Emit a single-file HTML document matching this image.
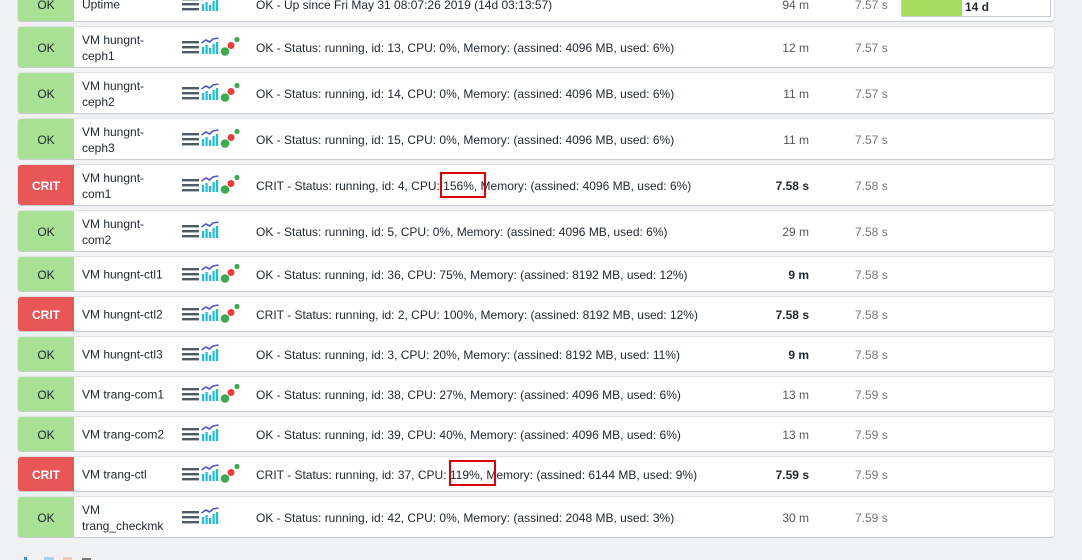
<!DOCTYPE html>
<html><head><meta charset="utf-8"><style>
body{margin:0;width:1082px;height:560px;background:#f0f1f3;font-family:"Liberation Sans",Arial,sans-serif;font-size:12px;color:#1e262e;position:relative;overflow:hidden}
.r{position:absolute;left:18px;width:1036px;background:#fff;border-radius:3px;box-shadow:0 1px 0 #c8cbd3,0 0 0 1px #e0e2e7}
.b{position:absolute;left:0;top:0;bottom:0;width:56px;border-radius:3px 0 0 3px;display:flex;align-items:center;justify-content:center;font-size:12px;padding-top:1px;box-sizing:border-box}
.ok{background:#a8e094;color:#1e262e}
.cr{background:#e85657;color:#fff;font-weight:bold}
.n{position:absolute;left:64px;width:95px;line-height:16px;top:50%;transform:translateY(-47%)}
.ic{position:absolute;left:164px;top:50%;transform:translateY(-50%);width:60px;height:22px}
.t{position:absolute;left:238px;top:50%;transform:translateY(-44%);white-space:nowrap}
.a{position:absolute;right:245px;top:50%;transform:translateY(-44%);color:#555}
.a.bd{font-weight:bold;color:#1e262e}
.c{position:absolute;left:837px;top:50%;transform:translateY(-44%);color:#777}
.box{position:absolute;border:2px solid #e00000}
</style></head><body>
<svg width="0" height="0" style="position:absolute"><defs>
<g id="m"><rect x="0" y="5" width="17" height="2.4" fill="#4e5a66"/><rect x="0" y="10" width="17" height="2.4" fill="#4e5a66"/><rect x="0" y="15" width="17" height="2.4" fill="#4e5a66"/>
<rect x="20" y="11" width="2.2" height="7" fill="#19c0d8"/><rect x="23.5" y="9" width="2.2" height="9" fill="#19c0d8"/><rect x="27" y="12" width="2.2" height="6" fill="#19c0d8"/><rect x="30.5" y="8" width="2.2" height="10" fill="#19c0d8"/><rect x="34" y="6" width="2.2" height="12" fill="#19c0d8"/>
<path d="M19.5 7 L24 4 L27.5 6 L31 3 L36.5 2" stroke="#4d5ac8" stroke-width="1.6" fill="none"/></g>
<g id="d"><circle cx="43" cy="15.5" r="4.3" fill="#3cab4a"/><circle cx="49" cy="9.5" r="3.5" fill="#ee3b3b"/><circle cx="55" cy="3.5" r="2.6" fill="#3cab4a"/></g>
</defs></svg>

<div class="r" style="top:-13px;height:34px"><div class="b ok">OK</div><div class="n">Uptime</div><svg class="ic"><use href="#m"/></svg><div class="t">OK - Up since Fri May 31 08:07:26 2019 (14d 03:13:57)</div><div class="a">94 m</div><div class="c">7.57 s</div>
<div style="position:absolute;left:883px;top:0;width:148px;height:29px;border:1px solid #c8cbd3;border-top:none;background:#fff"><div style="position:absolute;left:0;top:0;bottom:0;width:60px;background:#a4dd5e"></div><b style="position:absolute;left:63px;bottom:2px">14 d</b></div></div>

<div class="r" style="top:27px;height:40px"><div class="b ok">OK</div><div class="n">VM hungnt-<br>ceph1</div><svg class="ic"><use href="#m"/><use href="#d"/></svg><div class="t">OK - Status: running, id: 13, CPU: 0%, Memory: (assined: 4096 MB, used: 6%)</div><div class="a">12 m</div><div class="c">7.57 s</div></div>
<div class="r" style="top:73px;height:40px"><div class="b ok">OK</div><div class="n">VM hungnt-<br>ceph2</div><svg class="ic"><use href="#m"/><use href="#d"/></svg><div class="t">OK - Status: running, id: 14, CPU: 0%, Memory: (assined: 4096 MB, used: 6%)</div><div class="a">11 m</div><div class="c">7.57 s</div></div>
<div class="r" style="top:119px;height:40px"><div class="b ok">OK</div><div class="n">VM hungnt-<br>ceph3</div><svg class="ic"><use href="#m"/><use href="#d"/></svg><div class="t">OK - Status: running, id: 15, CPU: 0%, Memory: (assined: 4096 MB, used: 6%)</div><div class="a">11 m</div><div class="c">7.57 s</div></div>
<div class="r" style="top:165px;height:40px"><div class="b cr">CRIT</div><div class="n">VM hungnt-<br>com1</div><svg class="ic"><use href="#m"/><use href="#d"/></svg><div class="t">CRIT - Status: running, id: 4, CPU: 156%, Memory: (assined: 4096 MB, used: 6%)</div><div class="a bd">7.58 s</div><div class="c">7.58 s</div></div>
<div class="r" style="top:211px;height:40px"><div class="b ok">OK</div><div class="n">VM hungnt-<br>com2</div><svg class="ic"><use href="#m"/></svg><div class="t">OK - Status: running, id: 5, CPU: 0%, Memory: (assined: 4096 MB, used: 6%)</div><div class="a">29 m</div><div class="c">7.58 s</div></div>
<div class="r" style="top:257px;height:34px"><div class="b ok">OK</div><div class="n">VM hungnt-ctl1</div><svg class="ic"><use href="#m"/><use href="#d"/></svg><div class="t">OK - Status: running, id: 36, CPU: 75%, Memory: (assined: 8192 MB, used: 12%)</div><div class="a bd">9 m</div><div class="c">7.58 s</div></div>
<div class="r" style="top:297px;height:34px"><div class="b cr">CRIT</div><div class="n">VM hungnt-ctl2</div><svg class="ic"><use href="#m"/><use href="#d"/></svg><div class="t">CRIT - Status: running, id: 2, CPU: 100%, Memory: (assined: 8192 MB, used: 12%)</div><div class="a bd">7.58 s</div><div class="c">7.58 s</div></div>
<div class="r" style="top:337px;height:34px"><div class="b ok">OK</div><div class="n">VM hungnt-ctl3</div><svg class="ic"><use href="#m"/></svg><div class="t">OK - Status: running, id: 3, CPU: 20%, Memory: (assined: 8192 MB, used: 11%)</div><div class="a bd">9 m</div><div class="c">7.58 s</div></div>
<div class="r" style="top:377px;height:34px"><div class="b ok">OK</div><div class="n">VM trang-com1</div><svg class="ic"><use href="#m"/><use href="#d"/></svg><div class="t">OK - Status: running, id: 38, CPU: 27%, Memory: (assined: 4096 MB, used: 6%)</div><div class="a">13 m</div><div class="c">7.59 s</div></div>
<div class="r" style="top:417px;height:34px"><div class="b ok">OK</div><div class="n">VM trang-com2</div><svg class="ic"><use href="#m"/></svg><div class="t">OK - Status: running, id: 39, CPU: 40%, Memory: (assined: 4096 MB, used: 6%)</div><div class="a">13 m</div><div class="c">7.59 s</div></div>
<div class="r" style="top:457px;height:34px"><div class="b cr">CRIT</div><div class="n">VM trang-ctl</div><svg class="ic"><use href="#m"/><use href="#d"/></svg><div class="t">CRIT - Status: running, id: 37, CPU: 119%, Memory: (assined: 6144 MB, used: 9%)</div><div class="a bd">7.59 s</div><div class="c">7.59 s</div></div>
<div class="r" style="top:497px;height:40px"><div class="b ok">OK</div><div class="n">VM<br>trang_checkmk</div><svg class="ic"><use href="#m"/></svg><div class="t">OK - Status: running, id: 42, CPU: 0%, Memory: (assined: 2048 MB, used: 3%)</div><div class="a">30 m</div><div class="c">7.59 s</div></div>

<div class="box" style="left:440px;top:172px;width:42px;height:22px"></div>
<div class="box" style="left:449px;top:460px;width:43px;height:22px"></div>

<div style="position:absolute;left:24px;top:557px;width:3px;height:3px;background:#3a8fe0"></div>
<div style="position:absolute;left:44px;top:557px;width:10px;height:3px;background:#a9d3f0"></div>
<div style="position:absolute;left:63px;top:557px;width:9px;height:3px;background:#f8c8b8"></div>
<div style="position:absolute;left:82px;top:558px;width:9px;height:2px;background:#777"></div>
</body></html>
